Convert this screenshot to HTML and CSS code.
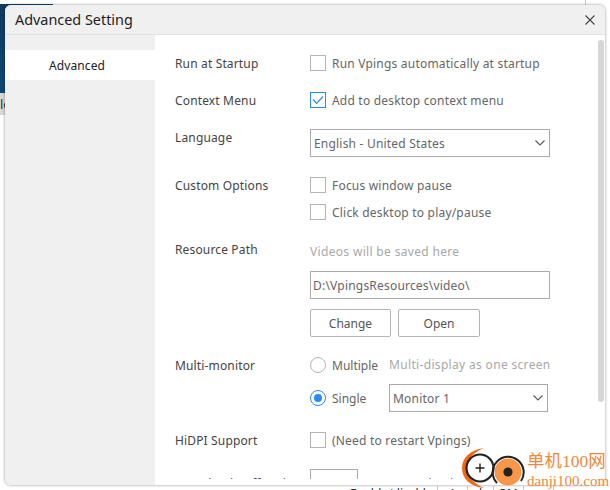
FILE: index.html
```html
<!DOCTYPE html>
<html lang="en">
<head>
<meta charset="utf-8">
<title>Advanced Setting</title>
<link rel="stylesheet" href="styles.css">
</head>
<body>
<div class="desktop">
  <div class="bg-photo"></div>
  <div class="bg-label">lo</div>
  <div class="bg-vline"></div>
  <div class="bg-bottom">
    <span class="bg-text">Enable/disable</span>
    <span class="bg-cell">A</span><span class="bg-cell narrow">l</span><span class="bg-cell">PM</span><span class="bg-cell"></span><span class="bg-cell"></span>
  </div>
  <section class="dialog">
    <header class="titlebar">
      <h1 class="title">Advanced Setting</h1>
      <svg class="close" width="12" height="12" viewBox="0 0 12 12"><path d="M1.500 1.500l9 9M10.500 1.500l-9 9" stroke="#444" stroke-width="1.1" fill="none"/></svg>
    </header>
    <div class="body">
      <nav class="sidebar"><div class="nav-item">Advanced</div></nav>
      <main class="content">
        <div class="row r-startup">
          <div class="label">Run at Startup</div>
          <div class="ctrl"><label class="check"><span class="box"></span>Run Vpings automatically at startup</label></div>
        </div>
        <div class="row r-context">
          <div class="label">Context Menu</div>
          <div class="ctrl"><label class="check"><span class="box on"><svg width="14" height="14" viewBox="0 0 14 14"><path d="M2 6.500l3.600 3.800L12 3.500" stroke="#2b8cf0" stroke-width="1.2" fill="none"/></svg></span>Add to desktop context menu</label></div>
        </div>
        <div class="row r-lang">
          <div class="label">Language</div>
          <div class="ctrl"><div class="select wide">English - United States<svg class="chev" width="12" height="8" viewBox="0 0 12 8"><path d="M1.500 1.500l4.500 4.500 4.500-4.500" stroke="#555" stroke-width="1.1" fill="none"/></svg></div></div>
        </div>
        <div class="row r-custom">
          <div class="label">Custom Options</div>
          <div class="ctrl stack">
            <label class="check"><span class="box"></span>Focus window pause</label>
            <label class="check"><span class="box"></span>Click desktop to play/pause</label>
          </div>
        </div>
        <div class="row r-path">
          <div class="label">Resource Path</div>
          <div class="ctrl">
            <div class="hint">Videos will be saved here</div>
            <div class="input wide">D:\VpingsResources\video\</div>
            <div class="buttons"><div class="btn">Change</div><div class="btn">Open</div></div>
          </div>
        </div>
        <div class="row r-monitor">
          <div class="label">Multi-monitor</div>
          <div class="ctrl">
            <div class="radio-row first"><span class="radio"></span><span class="radio-label">Multiple</span><span class="hint">Multi-display as one screen</span></div>
            <div class="radio-row"><span class="radio on"></span><span class="radio-label">Single</span><div class="select mon">Monitor 1<svg class="chev" width="12" height="8" viewBox="0 0 12 8"><path d="M1.500 1.500l4.500 4.500 4.500-4.500" stroke="#555" stroke-width="1.1" fill="none"/></svg></div></div>
          </div>
        </div>
        <div class="row r-hidpi">
          <div class="label">HiDPI Support</div>
          <div class="ctrl"><label class="check"><span class="box"></span>(Need to restart Vpings)</label></div>
        </div>
        <div class="row r-buffer">
          <div class="label">Download Buffer Size</div>
          <div class="ctrl buffer"><div class="input small">3</div><span class="buffer-note">Segs/Download</span></div>
        </div>
      </main>
      <div class="scrollbar"></div>
    </div>
  </section>
  <div class="watermark">
    <svg width="70" height="44" viewBox="0 0 70 44">
      <path d="M24 2C10 4 2 12 2 22s8 19 22 20c-8-4-17-9-17-20S15 6 24 2z" fill="#f4670f"/>
      <circle cx="20" cy="22" r="13.500" fill="#fff" stroke="#222" stroke-width="2.200"/>
      <path d="M15.500 22h9M20 17.500v9" stroke="#222" stroke-width="1.400"/>
      <circle cx="48" cy="26" r="13.500" fill="#f8974a"/>
      <path d="M37 37a15.500 15.500 0 1 1 24-2" stroke="#222" stroke-width="2" fill="none"/>
      <circle cx="48" cy="26" r="4.600" fill="#222"/>
    </svg>
    <div class="wm-text"><div class="wm-cn">单机100网</div><div class="wm-en">danji100.com</div></div>
  </div>
</div>
</body>
</html>
```
FILE: styles.css
```css
* { box-sizing: border-box; }
html, body { margin: 0; padding: 0; }
body { width: 610px; height: 490px; overflow: hidden; background: #fff; font-family: "Noto Sans", sans-serif; font-size: 12px; color: #333; }
.desktop { position: relative; width: 610px; height: 490px; background: #fff; overflow: hidden; }
.bg-photo { position: absolute; left: 0; top: 4px; width: 53px; height: 89px; background: linear-gradient(135deg, #123a5e, #0f4673 60%, #1a5a86); }
.bg-label { position: absolute; left: 0; top: 93px; width: 10px; height: 22px; background: #d8d8d8; font-size: 13px; line-height: 22px; }
.bg-vline { position: absolute; left: 585px; top: 0; width: 1px; height: 5px; background: #ccc; }
.bg-bottom { position: absolute; left: 350px; top: 486px; right: 0; height: 4px; display: flex; font-size: 12px; line-height: 16px; color: #333; overflow: hidden; }
.bg-text { width: 87px; }
.bg-cell { width: 30px; border-left: 1px solid #ccc; text-align: center; }
.bg-cell.narrow { width: 26px; }
.dialog { position: absolute; left: 5px; top: 5px; width: 600px; height: 480px; background: #fff; border-radius: 6px; overflow: hidden; box-shadow: 0 0 3px rgba(0,0,0,.45); display: flex; flex-direction: column; }
.titlebar { height: 30px; flex: none; background: #f0f0f0; border-bottom: 1px solid #e2e2e2; display: flex; align-items: center; justify-content: space-between; padding: 0 9px 0 10px; }
.title { margin: 0; font-size: 14.400px; font-weight: 400; color: #222; }
.body { flex: 1; display: flex; min-height: 0; position: relative; }
.sidebar { width: 150px; flex: none; background: #f0f0f0; padding-top: 15px; }
.nav-item { height: 30px; background: #fff; text-align: center; line-height: 32px; color: #222; padding-right: 6px; letter-spacing: .1px; }
.content { flex: 1; height: 444px; overflow: hidden; padding-left: 20px; }
.scrollbar { position: absolute; right: 1px; top: 5px; width: 6px; height: 362px; background: #d6d6d6; border-radius: 3px; }
.row { display: flex; }
.label { width: 135px; flex: none; line-height: 18px; color: #444; white-space: nowrap; margin-top: 1px; letter-spacing: .15px; }
.ctrl { flex: 1; min-width: 0; }
.r-startup { padding-top: 19px; height: 56px; }
.r-context { height: 37px; }
.r-lang { height: 48px; }
.r-lang .select { margin-top: 1px; }
.r-custom { height: 64px; }
.r-path { height: 116px; }
.r-monitor { height: 75px; }
.r-hidpi { height: 38px; }
.r-buffer .label { padding-top: 5px; }
.check { display: flex; align-items: center; gap: 6px; height: 18px; color: #666; white-space: nowrap; letter-spacing: .2px; }
.box { width: 16px; height: 16px; flex: none; border: 1px solid #b4b4b4; background: #fff; display: flex; align-items: center; justify-content: center; }
.box.on { border-color: #2b8cf0; }
.stack { display: flex; flex-direction: column; gap: 9px; }
.select, .input { border: 1px solid #aaa; height: 28px; display: flex; align-items: center; color: #666; background: #fff; white-space: nowrap; letter-spacing: .2px; }
.select { padding: 0 3px; justify-content: space-between; }
.wide { width: 240px; }
.mon { width: 159px; flex: none; }
.input { padding-left: 2px; }
.small { width: 48px; }
.hint { color: #a8a8a8; line-height: 18px; white-space: nowrap; letter-spacing: .33px; }
.buttons { display: flex; gap: 7px; margin-top: 10px; }
.btn { width: 81px; height: 28px; border: 1px solid #b4b4b4; border-radius: 2px; display: flex; align-items: center; justify-content: center; color: #555; }
.btn + .btn { width: 82px; }
.r-path .hint { height: 28px; margin-top: 3px; }
.radio-row { display: flex; align-items: center; }
.radio-row.first { height: 18px; margin-bottom: 10px; }
.radio { width: 16px; height: 16px; flex: none; border: 1px solid #b4b4b4; border-radius: 50%; margin-right: 6px; position: relative; }
.radio.on { border-color: #2b8cf0; }
.radio.on::after { content: ""; position: absolute; left: 3px; top: 3px; width: 8px; height: 8px; border-radius: 50%; background: #2b8cf0; }
.radio-label { width: 57px; color: #666; }
.buffer { display: flex; gap: 7px; color: #666; white-space: nowrap; }
.buffer-note { padding-top: 6px; line-height: 18px; }
.watermark { position: absolute; left: 460px; top: 446px; width: 150px; height: 44px; display: flex; align-items: flex-start; }
.watermark svg { flex: none; }
.wm-text { margin-left: -3px; color: #f0883a; white-space: nowrap; font-family: "Liberation Serif", "Noto Sans CJK SC", serif; }
.wm-cn { font-size: 17.500px; line-height: 20px; margin-top: 5px; }
.wm-en { font-size: 15px; line-height: 16px; margin-top: 2px; }
```
